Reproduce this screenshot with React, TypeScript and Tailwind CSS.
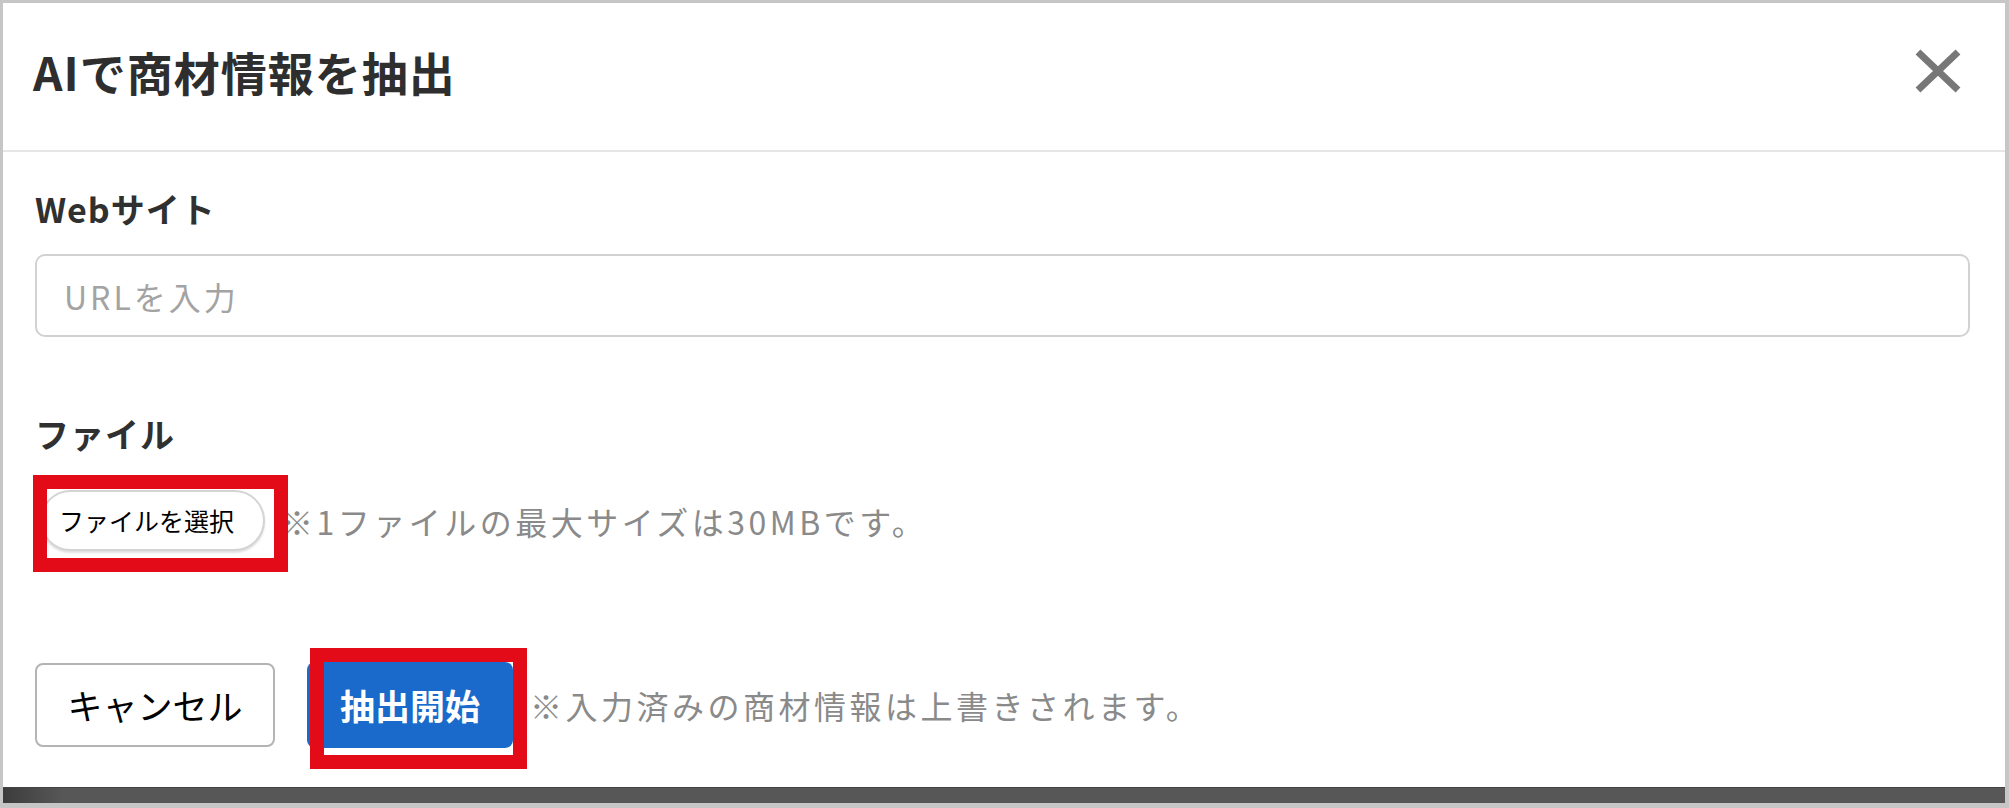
import React from "react";

const jp = "font-['Noto_Sans_CJK_JP','Noto_Sans',sans-serif]";

function CloseIcon() {
    return (
        <svg width="46" height="44" viewBox="0 0 46 44" fill="none">
            <path d="M3 3 L43 41 M43 3 L3 41" stroke="#777777" strokeWidth="7" />
        </svg>
    );
}

function App() {
    return (
        <div className={`w-[2009px] h-[808px] bg-[#c6c6c6] pt-[3px] pl-[3px] pr-[4px] pb-[5px] flex flex-col ${jp}`}>
            <div className="flex-1 bg-white flex flex-col">
                {/* header */}
                <div className="h-[149px] flex items-center justify-between pl-[30px] pr-[44px] pb-[12px] border-b-2 border-[#e6e6e6]">
                    <h1 className="text-[46px] leading-none font-bold tracking-[1px] text-[#2e2e2e]">
                        AIで商材情報を抽出
                    </h1>
                    <button type="button" className="flex items-center justify-center">
                        <CloseIcon />
                    </button>
                </div>

                {/* body */}
                <div className="flex flex-col pl-[32px] pr-[35px]">
                    <label className="mt-[40px] text-[34px] leading-none font-bold tracking-[1px] text-[#303030]">
                        Webサイト
                    </label>
                    <input
                        type="text"
                        placeholder="URLを入力"
                        className="mt-[28px] h-[83px] w-full border-2 border-[#d2d2d2] rounded-[10px] pl-[27px] text-[32px] tracking-[3px] outline-none placeholder:text-[#a3a3a3]"
                    />

                    <label className="mt-[80px] text-[34px] leading-none font-bold tracking-[1px] text-[#303030]">
                        ファイル
                    </label>

                    <div className="mt-[39px] flex items-center">
                        <div className="relative ml-[5px]">
                            <button
                                type="button"
                                className="h-[61px] w-[225px] rounded-full border-2 border-[#d4d4d4] bg-white shadow-[0_2px_2px_rgba(0,0,0,0.12)] text-[25px] text-black pl-[17px] text-left"
                            >
                                ファイルを選択
                            </button>
                            <div className="absolute left-[-7px] top-[-15px] w-[255px] h-[97px] border-[14px] border-[#e30b17]" />
                        </div>
                        <span className="ml-[16px] text-[32px] tracking-[3.5px] text-[#8a8a8a]">
                            ※1ファイルの最大サイズは30MBです。
                        </span>
                    </div>

                    <div className="mt-[111px] flex items-center">
                        <button
                            type="button"
                            className="h-[84px] w-[240px] rounded-[8px] border-2 border-[#b4b4b4] bg-white text-[35px] text-black"
                        >
                            キャンセル
                        </button>
                        <div className="relative ml-[32px]">
                            <button
                                type="button"
                                className="h-[86px] w-[206px] rounded-[8px] bg-[#1a6acb] text-white text-[35px] font-bold"
                            >
                                抽出開始
                            </button>
                            <div className="absolute left-[3px] top-[-14px] w-[217px] h-[121px] border-[14px] border-[#e30b17]" />
                        </div>
                        <span className="ml-[17px] text-[32px] tracking-[3.5px] text-[#8a8a8a]">
                            ※入力済みの商材情報は上書きされます。
                        </span>
                    </div>
                </div>
            </div>
            <div className="h-[16px] border-t border-[#444444] bg-[linear-gradient(to_right,#3c3c3c,#575757_60px,#575757)]" />
        </div>
    );
}

export default App;
